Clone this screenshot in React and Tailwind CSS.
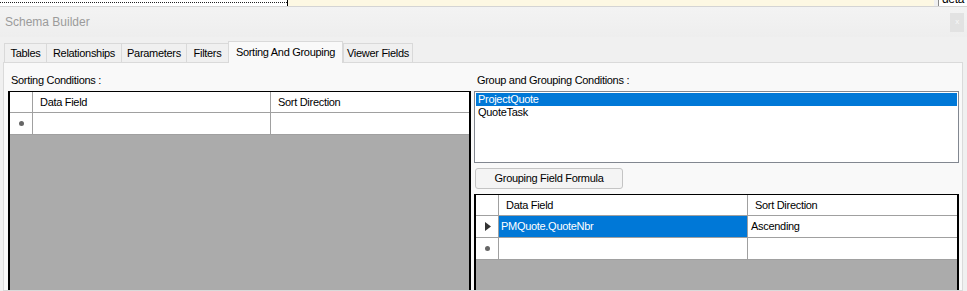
import React from 'react';

const font = { fontFamily: '"Liberation Sans", Arial, sans-serif' };

const tabs = [
  { label: 'Tables', w: 'w-[42px]' },
  { label: 'Relationships', w: 'w-[75px]' },
  { label: 'Parameters', w: 'w-[65px]' },
  { label: 'Filters', w: 'w-[42px]' },
  { label: 'Sorting And Grouping', w: 'w-[115px]', active: true },
  { label: 'Viewer Fields', w: 'w-[70px]' },
];

function Tab({ label, w, active }) {
  if (active) {
    return (
      <div className={`${w} h-[22px] -mt-[2px] flex justify-center items-start pt-[2px] bg-[#f9f9f9] border border-b-0 border-[#d9d9d9] relative z-10 -mb-px whitespace-nowrap`}>
        {label}
      </div>
    );
  }
  return (
    <div className={`${w} h-[19px] flex justify-center items-center bg-[#f0f0f0] border border-b-0 border-r-0 border-[#d9d9d9] last:border-r whitespace-nowrap`}>
      {label}
    </div>
  );
}

function RowMarker({ kind }) {
  if (kind === 'current') {
    return (
      <svg width="6" height="9" viewBox="0 0 6 9">
        <path d="M0 0 L6 4.5 L0 9 Z" fill="#333" />
      </svg>
    );
  }
  return <span className="block w-[5px] h-[5px] rounded-full bg-[#666]" />;
}

function Grid({ rows, first = 'w-[238px]' }) {
  return (
    <div className="h-[240px] shrink-0 border-2 border-t border-b-0 border-black bg-[#ababab] overflow-hidden">
      <div className="flex h-[21px] bg-white border-b border-[#a0a0a0]">
        <div className="w-[23px] border-r border-[#a0a0a0]" />
        <div className={`${first} border-r border-[#a0a0a0] pl-[7px] flex items-center`}>Data Field</div>
        <div className="flex-1 pl-[7px] flex items-center">Sort Direction</div>
      </div>
      {rows.map((r, i) => (
        <div key={i} className="flex h-[22px] bg-white border-b border-[#a0a0a0]">
          <div className="w-[23px] border-r border-[#a0a0a0] flex items-center justify-center pl-[1px]">
            <RowMarker kind={r.marker} />
          </div>
          <div className={`${first} border-r border-[#a0a0a0] pl-[2px] flex items-center ${r.selected ? 'bg-[#0078d7] text-white' : ''}`}>
            {r.field}
          </div>
          <div className="flex-1 pl-[3px] flex items-center">{r.dir}</div>
        </div>
      ))}
    </div>
  );
}

export default function App() {
  return (
    <div className="w-[967px] h-[291px] overflow-hidden bg-[#f0f0f0] text-[11px] tracking-[-0.3px] text-black flex flex-col" style={font}>
      <div className="h-[7px] flex border-b border-[#d4d4d4] shrink-0">
        <div className="w-[287px] bg-white pt-[2px]">
          <div className="border-t border-dotted border-[#222] w-full" />
        </div>
        <div className="w-px bg-black" />
        <div className="flex-1 bg-[#fdf8e3]" />
        <div className="w-[4px] bg-[#f0f0f0]" />
        <div className="w-[29px] bg-white border-l border-[#888] overflow-hidden">
          <div className="-mt-[8px] pl-[3px] text-[12px] leading-[14px]">deta</div>
        </div>
      </div>

      <div className="h-[30px] flex items-center justify-between pl-[5px] pr-[3px] bg-gradient-to-b from-[#f3f3f3] to-[#eeeeee] shrink-0">
        <span className="text-[12px] text-[#9b9b9b] tracking-normal">Schema Builder</span>
        <div className="w-[14px] h-[19px] bg-[#e2e2e2] flex items-center justify-center text-[8px] text-[#f8f8f8]">x</div>
      </div>

      <div className="flex items-end pl-[4px] pt-[6px] shrink-0">
        {tabs.map((t) => (
          <Tab key={t.label} {...t} />
        ))}
      </div>

      <div className="flex-1 ml-[3px] mr-[4px] bg-[#f9f9f9] border border-[#dadada] flex gap-[3px] pl-[4px] pr-[3px] pt-[10px] min-h-0 overflow-hidden">
        <div className="w-[463px] flex flex-col">
          <div className="h-[18px] shrink-0 pl-[3px] leading-[14px]">Sorting Conditions :</div>
          <Grid rows={[{ marker: 'new', field: '', dir: '' }]} first="w-[238px]" />
        </div>

        <div className="flex-1 flex flex-col">
          <div className="h-[18px] shrink-0 pl-[3px] leading-[14px]">Group and Grouping Conditions :</div>
          <div className="h-[72px] bg-white border border-[#828790] p-[1px] shrink-0">
            <div className="h-[13px] bg-[#0078d7] text-white pl-[2px] leading-[13px]">ProjectQuote</div>
            <div className="h-[13px] pl-[2px] leading-[13px]">QuoteTask</div>
          </div>
          <div className="h-[31px] flex items-center shrink-0">
            <div className="w-[148px] h-[21px] ml-px rounded-[3px] border border-[#c4c4c4] bg-[#f4f4f4] flex items-center justify-center">
              Grouping Field Formula
            </div>
          </div>
          <Grid
            first="w-[249px]"
            rows={[
              { marker: 'current', field: 'PMQuote.QuoteNbr', dir: 'Ascending', selected: true },
              { marker: 'new', field: '', dir: '' },
            ]}
          />
        </div>
      </div>
    </div>
  );
}
